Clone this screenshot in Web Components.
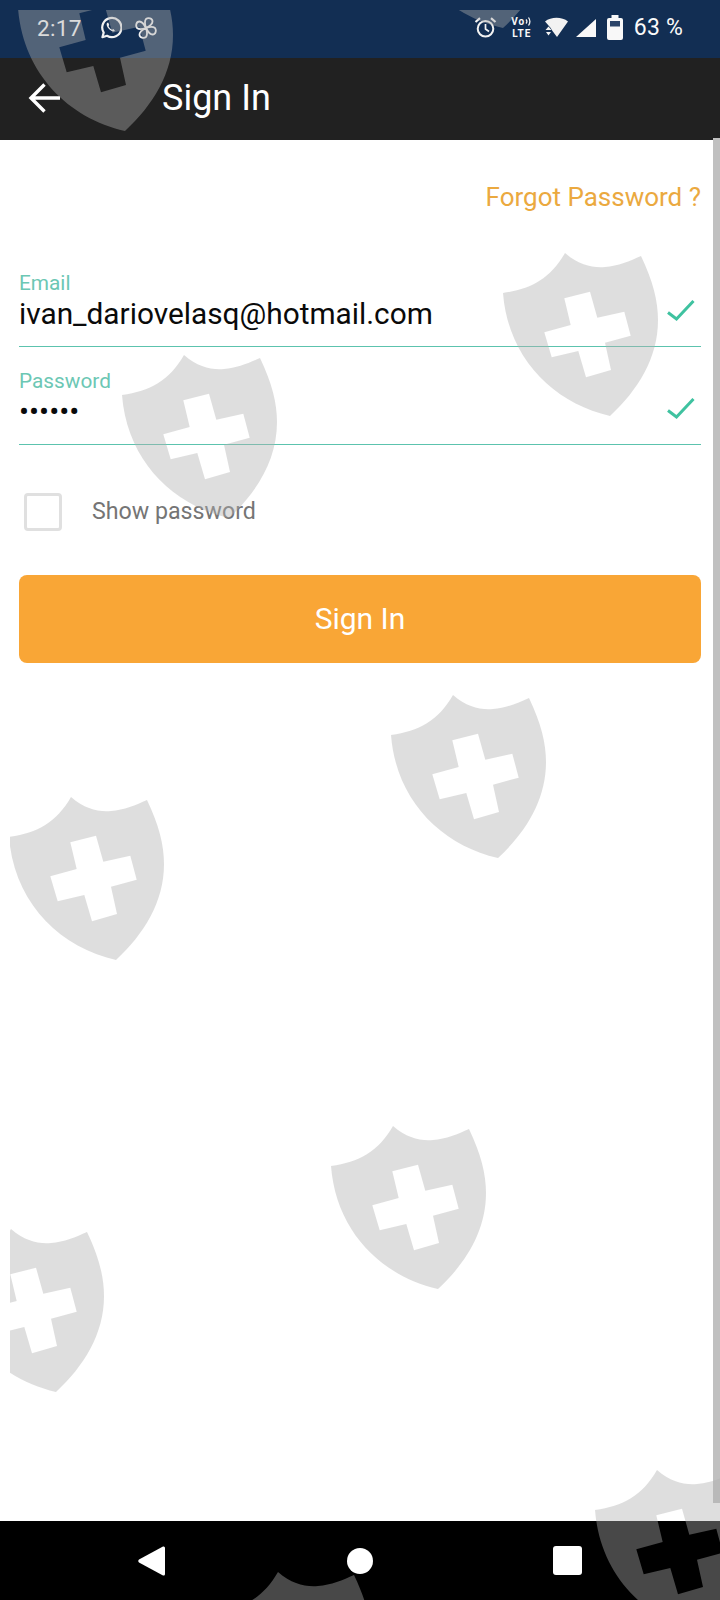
<!DOCTYPE html>
<html>
<head>
<meta charset="utf-8">
<title>Sign In</title>
<style>
  html, body { margin: 0; padding: 0; }
  body {
    position: relative;
    width: 720px;
    height: 1600px;
    overflow: hidden;
    display: flex;
    flex-direction: column;
    background: #fff;
    font-family: Roboto, "Liberation Sans", sans-serif;
  }
</style>
</head>
<body>
  <status-bar></status-bar>
  <app-toolbar>Sign In</app-toolbar>
  <sign-in-form></sign-in-form>
  <nav-bar></nav-bar>
  <shield-watermark></shield-watermark>

<script>
const BLADE = 'M11 11 C10 8 9.500 4 11 2 C13 0.500 17.500 1 17.500 4.500 C17.500 7.500 14 9.500 11 11 Z';

class StatusBar extends HTMLElement {
  connectedCallback() {
    this.attachShadow({ mode: 'open' });
    this.shadowRoot.innerHTML = `
      <style>
        :host {
          display: flex;
          align-items: center;
          height: 58px;
          flex: none;
          padding: 0 37px 3px 37px;
          box-sizing: border-box;
          background: #122e53;
          color: #fafafa;
          font-size: 22.500px;
        }
        .group { display: flex; align-items: center; }
        .right { margin-left: auto; }
        svg { display: block; flex: none; }
        .time { margin-right: 17px; letter-spacing: 0.3px; }
        .fan { margin-left: 13px; }
        .volte {
          width: 22px;
          margin: 0 11px 0 14px;
          font-size: 10px;
          font-weight: 700;
          line-height: 12px;
          letter-spacing: 1px;
          text-align: center;
        }
        .volte div { display: flex; justify-content: center; align-items: center; }
        .signal { margin: 0 11px 0 7px; }
        .level { margin-left: 11px; letter-spacing: 0.2px; font-size: 23px; }
      </style>
      <div class="group">
        <span class="time">2:17</span>
        <svg width="23" height="23" viewBox="0 0 23 23" fill="none" stroke="#f2f2f2" stroke-width="2.2">
          <path d="M3.4 21.2 L4.7 16.6 A9.6 9.6 0 1 1 8 19.8 Z" stroke-linejoin="round"/>
          <path d="M8 7 C7 8.5 8 11 10 13 C12 15 14.500 16 16 15 L14.500 13 L13 13.800 C11.500 13 10 11.500 9.500 10 L10.300 9 L9.200 6.600 Z" fill="#f2f2f2" stroke="none"/>
        </svg>
        <svg class="fan" width="22" height="22" viewBox="0 0 22 22" fill="none" stroke="#f2f2f2" stroke-width="1.800" stroke-linejoin="round">
          <path d="${BLADE}"/>
          <path transform="rotate(90 11 11)" d="${BLADE}"/>
          <path transform="rotate(180 11 11)" d="${BLADE}"/>
          <path transform="rotate(270 11 11)" d="${BLADE}"/>
        </svg>
      </div>
      <div class="group right">
        <svg width="23" height="23" viewBox="0 0 23 23" fill="none" stroke="#f2f2f2" stroke-width="2">
          <circle cx="11.500" cy="12.800" r="7.800"/>
          <path d="M11.500 8 V13 L15 15.500" stroke-width="1.700"/>
          <path d="M1.500 6 L6 2.200 M21.500 6 L17 2.200" stroke-width="2.200"/>
        </svg>
        <div class="volte">
          <div>Vo<svg width="7" height="11" viewBox="0 0 7 11" fill="none" stroke="#f2f2f2" stroke-width="1.300"><path d="M1 3.500 A3 3 0 0 1 1 7.500 M3.500 1.500 A7 7 0 0 1 3.500 9.500"/></svg></div>
          <div>LTE</div>
        </div>
        <svg width="25" height="21" viewBox="0 0 25 21">
          <path d="M1 4.500 C7 -0.500 18 -0.500 24 4.500 L13 20 L8.500 14 L6.500 10.800 Z" fill="#f2f2f2"/>
          <path d="M1.500 13 L4.500 9.500 L7.500 13 Z M2 15 H7 L4.500 18.500 Z" fill="#f2f2f2"/>
        </svg>
        <svg class="signal" width="20" height="18" viewBox="0 0 20 18"><path d="M0 18 L20 0 V18 Z" fill="#f8f8f8"/></svg>
        <svg width="16" height="25" viewBox="0 0 16 25">
          <path d="M4.500 0 H11.500 V3 H14 Q16 3 16 5 V23 Q16 25 14 25 H2 Q0 25 0 23 V5 Q0 3 2 3 H4.500 Z" fill="#f8f8f8"/>
          <rect x="3" y="6" width="10" height="5.500" fill="#2b4468"/>
        </svg>
        <span class="level">63 %</span>
      </div>
    `;
  }
}

class AppToolbar extends HTMLElement {
  connectedCallback() {
    this.attachShadow({ mode: 'open' });
    this.shadowRoot.innerHTML = `
      <style>
        :host {
          display: flex;
          align-items: center;
          height: 82px;
          flex: none;
          padding: 0 0 2px 28px;
          box-sizing: border-box;
          background: #212121;
          color: #fff;
          font-size: 36px;
        }
        svg { display: block; margin-right: 102px; flex: none; }
      </style>
      <svg width="32" height="32" viewBox="0 0 32 32" fill="none" stroke="#fff" stroke-width="3.400">
        <path d="M32 16 H3 M16.500 2.500 L3 16 L16.500 29.500"/>
      </svg>
      <slot></slot>
    `;
  }
}

class FormField extends HTMLElement {
  connectedCallback() {
    this.attachShadow({ mode: 'open' });
    this.shadowRoot.innerHTML = `
      <style>
        :host {
          display: flex;
          align-items: flex-start;
          height: 98px;
          box-sizing: border-box;
          border-bottom: 1px solid #5cc3ae;
        }
        .text { flex: 1; padding-top: 22px; }
        .label {
          color: #6cc7b4;
          font-size: 20.800px;
          line-height: 24px;
        }
        .value {
          margin-top: 1px;
          color: #0a0a0a;
          font-size: 29.800px;
          line-height: 36px;
        }
        svg { display: block; margin: 51px 6px 0 0; flex: none; }
      </style>
      <div class="text">
        <div class="label"><slot name="label"></slot></div>
        <div class="value"><slot></slot></div>
      </div>
      <svg width="28" height="22" viewBox="0 0 28 22" fill="none" stroke="#3fc2a0" stroke-width="3">
        <path d="M1 12.500 L9.500 19 L26.500 1"/>
      </svg>
    `;
  }
}

class PrimaryButton extends HTMLElement {
  connectedCallback() {
    this.attachShadow({ mode: 'open' });
    this.shadowRoot.innerHTML = `
      <style>
        :host {
          display: flex;
          align-items: center;
          justify-content: center;
          height: 88px;
          padding-bottom: 2px;
          box-sizing: border-box;
          border-radius: 8px;
          background: #f9a636;
          color: #fff;
          font-size: 30px;
        }
      </style>
      <slot></slot>
    `;
  }
}

class SignInForm extends HTMLElement {
  connectedCallback() {
    this.attachShadow({ mode: 'open' });
    this.shadowRoot.innerHTML = `
      <style>
        :host {
          display: block;
          position: relative;
          flex: 1;
          padding: 0 19px;
          background: #fff;
        }
        .forgot {
          padding-top: 43px;
          height: 109px;
          box-sizing: border-box;
          text-align: right;
          color: #eba93f;
          font-size: 26px;
          line-height: 28px;
        }
        .show {
          display: flex;
          align-items: center;
          margin: 48px 0 44px 5px;
          color: #757575;
          font-size: 23.200px;
        }
        .show span { padding-bottom: 2px; }
        .box {
          width: 38px;
          height: 38px;
          box-sizing: border-box;
          border: 3px solid #e0e0e0;
          border-radius: 4px;
          margin-right: 30px;
        }
        .scrollbar {
          position: absolute;
          top: -2px;
          right: 0;
          width: 7px;
          height: 1365px;
          background: #c0c0c0;
        }
      </style>
      <div class="forgot">Forgot Password ?</div>
      <form-field><span slot="label">Email</span>ivan_dariovelasq@hotmail.com</form-field>
      <form-field><span slot="label">Password</span>••••••</form-field>
      <div class="show"><div class="box"></div><span>Show password</span></div>
      <primary-button>Sign In</primary-button>
      <div class="scrollbar"></div>
    `;
  }
}

class NavBar extends HTMLElement {
  connectedCallback() {
    this.attachShadow({ mode: 'open' });
    this.shadowRoot.innerHTML = `
      <style>
        :host {
          display: flex;
          align-items: center;
          height: 79px;
          flex: none;
          padding-left: 138px;
          box-sizing: border-box;
          background: #000;
        }
        svg { display: block; flex: none; }
        .home { margin: 0 180px 0 182px; }
      </style>
      <svg width="27" height="30" viewBox="0 0 27 30"><path d="M25 0.500 Q27 0 27 2 V28 Q27 30 25 29.500 L1 16.500 Q-0.500 15 1 13.500 Z" fill="#fff"/></svg>
      <svg class="home" width="26" height="26" viewBox="0 0 26 26"><circle cx="13" cy="13" r="13" fill="#fff"/></svg>
      <svg width="29" height="29" viewBox="0 0 29 29"><rect width="29" height="29" rx="3" fill="#fff"/></svg>
    `;
  }
}

// the watermark sits over the whole screen, cut off 10px from the top and left
const SHIELDS = [
  [18, -32], [396, -135], [503, 253], [122, 355], [391, 695],
  [9, 797], [331, 1126], [-51, 1229], [595, 1470], [216, 1572]
];
const SHIELD_PATH = 'M0 40 C28 36 47 26 62 0 C76 12 89 15 102 14 C115 13 127 8 138 3 '
  + 'C150 28 155 48 155 67 C155 105 135 137 107 163 C50 150 5 105 0 40 Z '
  + 'M61.300 45.300 L87 38.700 L94.300 64.700 L121.300 58.700 L127.700 82.700 L102 89.700 L108 117 '
  + 'L83 124.300 L75.300 98 L48.700 104.300 L41.300 79.300 L67.700 72 Z';

class ShieldWatermark extends HTMLElement {
  connectedCallback() {
    this.attachShadow({ mode: 'open' });
    const shields = SHIELDS.map(([x, y]) =>
      `<path transform="translate(${x} ${y})" d="${SHIELD_PATH}" fill-rule="evenodd"/>`).join('');
    this.shadowRoot.innerHTML = `
      <style>
        :host {
          position: absolute;
          top: 10px;
          left: 10px;
          width: 710px;
          height: 1590px;
          overflow: hidden;
          pointer-events: none;
        }
        svg { display: block; }
      </style>
      <svg width="710" height="1590" viewBox="10 10 710 1590" fill="rgb(175,175,175)" fill-opacity="0.41">${shields}</svg>
    `;
  }
}

customElements.define('status-bar', StatusBar);
customElements.define('app-toolbar', AppToolbar);
customElements.define('form-field', FormField);
customElements.define('primary-button', PrimaryButton);
customElements.define('sign-in-form', SignInForm);
customElements.define('nav-bar', NavBar);
customElements.define('shield-watermark', ShieldWatermark);
</script>
</body>
</html>
